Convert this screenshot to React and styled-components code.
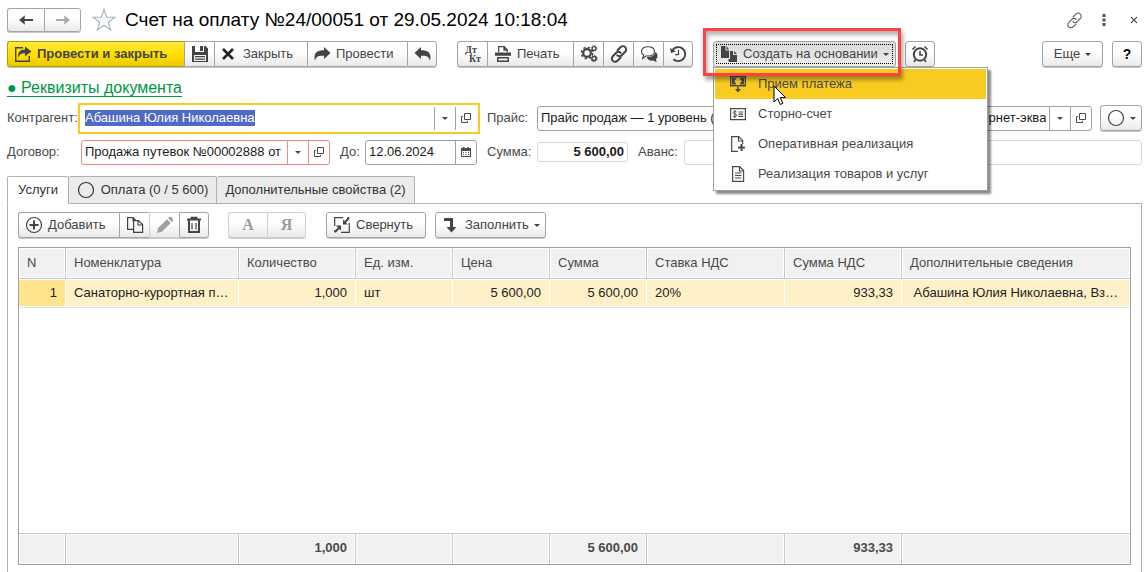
import React, { useEffect, useRef } from "react";
import styled, { createGlobalStyle, css } from "styled-components";

const GlobalStyle = createGlobalStyle`
  *, *::before, *::after {
    box-sizing: border-box;
  }
  body {
    margin: 0;
    background: #fff;
    color: #4a4a4a;
    font-family: "Liberation Sans", Arial, sans-serif;
    font-size: 13px;
    line-height: 16px;
    overflow: hidden;
  }
  button, input {
    font: inherit;
    color: inherit;
  }
  svg {
    display: block;
    flex: none;
  }
`;

const Page = styled.main`
  min-height: 100vh;
  display: flex;
  flex-direction: column;
  padding: 7px 3px 0 7px;
`;

const TitleBar = styled.header`
  display: flex;
  align-items: center;
  height: 26px;
`;

const Title = styled.h1`
  margin: 0 auto 0 6px;
  color: #000;
  font-size: 19px;
  line-height: 24px;
  font-weight: 400;
  white-space: nowrap;
`;

const WindowButton = styled.button`
  display: flex;
  align-items: center;
  justify-content: center;
  width: 16px;
  height: 24px;
  padding: 0;
  border: 0;
  background: none;
  color: #555;
`;

const StarButton = styled(WindowButton)`
  width: 30px;
  margin-left: 8px;
`;

const WindowButtons = styled.div`
  display: flex;
  gap: 14px;
`;

const Toolbar = styled.div`
  display: flex;
  height: 27px;
  margin-top: 8px;
`;

const Group = styled.div`
  display: flex;
  align-items: flex-start;
  position: relative;
  margin-left: ${p => p.$gap || 0}px;
`;

const Button = styled.button`
  display: flex;
  align-items: center;
  gap: 5px;
  width: ${p => p.$width || 30}px;
  height: ${p => p.$height || 26}px;
  padding: 0 6px;
  border: 1px solid #a4a4a4;
  border-right-width: 0;
  box-shadow: 0 1px 0 rgba(0, 0, 0, 0.22);
  background: linear-gradient(#fff 40%, #e9e9e9);
  color: #444;
  white-space: nowrap;

  &:first-child {
    border-radius: 3px 0 0 3px;
  }
  &:last-of-type {
    border-right-width: 1px;
    border-radius: 0 3px 3px 0;
  }
  &:first-child:last-of-type {
    border-radius: 3px;
  }
  &:disabled {
    border-color: #cfcfcf;
    color: #9b9b9b;
  }
  ${p =>
    p.$center &&
    css`
      justify-content: center;
      padding: 0;
    `}
  ${p =>
    p.$primary &&
    css`
      border-color: #b39b00;
      background: linear-gradient(#ffe93d, #ffe000 50%, #e9c900);
      font-weight: 700;
    `}
  ${p =>
    p.$pressed &&
    css`
      background: linear-gradient(#d9d9d9, #eee);
      outline: 1px dotted #000;
      outline-offset: -4px;
    `}
`;

const Letter = styled.span`
  font-family: "Liberation Serif", "Times New Roman", serif;
  font-size: 16px;
  font-weight: 700;
`;

const HelpMark = styled.b`
  color: #000;
  font-size: 14px;
`;

const Push = styled.div`
  margin-left: auto;
  display: flex;
  gap: 9px;
`;

const Highlight = styled.div`
  position: absolute;
  z-index: 3;
  top: -13px;
  left: -10px;
  width: 198px;
  height: 48px;
  border: 3px solid #fc4242;
  box-shadow: 2px 4px 4px rgba(0, 0, 0, 0.35), inset 2px 4px 4px rgba(0, 0, 0, 0.3);
  pointer-events: none;
`;

const Menu = styled.ul`
  position: absolute;
  z-index: 2;
  top: 26px;
  left: 0;
  width: 275px;
  margin: 0;
  padding: 1px;
  list-style: none;
  background: #fff;
  border: 1px solid #a0a0a0;
  box-shadow: 3px 3px 2px rgba(0, 0, 0, 0.45);
`;

const MenuItem = styled.button`
  display: flex;
  align-items: center;
  gap: 11px;
  width: 100%;
  height: 30px;
  padding: 0 14px;
  border: 0;
  background: ${p => (p.$active ? "#f9cb20" : "#fff")};
  color: #4a4a4a;
  text-align: left;
`;

const Pointer = styled.svg`
  position: absolute;
  z-index: 4;
  top: 44px;
  left: 60px;
`;

const DetailsLink = styled.a`
  align-self: flex-start;
  margin-top: 11px;
  border-bottom: 1px solid #009646;
  color: #009646;
  font-size: 16px;
  line-height: 17px;
  text-decoration: none;
`;

const FormRow = styled.div`
  display: flex;
  align-items: center;
  height: 30px;
  margin-top: ${p => p.$top}px;
`;

const Label = styled.label`
  flex: none;
  width: ${p => p.$width}px;
  margin-left: ${p => p.$gap || 0}px;
  white-space: nowrap;
`;

const Field = styled.div`
  display: flex;
  flex: ${p => p.$grow || 0} 1 ${p => p.$width}px;
  min-width: 0;
  height: ${p => p.$height || 25}px;
  border: 1px solid ${p => p.$color || "#a0a0a0"};
  border-radius: 3px;
  background: #fff;
  overflow: hidden;
  ${p =>
    p.$focused &&
    css`
      height: 31px;
      padding: 2px;
      border: 2px solid #f9cb20;
      border-radius: 0;
    `}
`;

const Input = styled.input`
  flex: 1;
  min-width: 0;
  padding: 0 3px;
  border: 0;
  outline: 0;
  background: none;
  color: #1c1c1c;
  text-align: ${p => (p.$bold ? "right" : "left")};
  font-weight: ${p => (p.$bold ? 700 : 400)};
  &::selection {
    background: #4f69c6;
    color: #fff;
  }
`;

const FieldButton = styled.button`
  display: flex;
  flex: none;
  align-items: center;
  justify-content: center;
  width: 21px;
  padding: 0;
  border: 0;
  border-left: 1px solid ${p => p.$color || "#a0a0a0"};
  background: none;
  color: #4a4a4a;
`;

const Tabs = styled.div`
  display: flex;
  margin-top: 9px;
`;

const Tab = styled.button`
  display: flex;
  align-items: center;
  justify-content: center;
  gap: 6px;
  width: ${p => p.$width}px;
  height: 28px;
  padding: 0 0 1px;
  border: 1px solid #b0b0b0;
  border-left-width: ${p => (p.$active ? 1 : 0)}px;
  border-bottom-color: ${p => (p.$active ? "#fff" : "#b0b0b0")};
  border-radius: 2px 2px 0 0;
  background: ${p => (p.$active ? "#fff" : "#ebebeb")};
  color: #333;
  white-space: nowrap;
  z-index: 1;
`;

const Panel = styled.section`
  flex: 1;
  display: flex;
  flex-direction: column;
  margin-top: -1px;
  padding: 0 10px 7px;
  border: solid #b0b0b0;
  border-width: 1px 1px 0;
`;

const Table = styled.table`
  flex: 1;
  width: 100%;
  margin-top: 8px;
  table-layout: fixed;
  border: 1px solid #a0a0a0;
  border-spacing: 0;
`;

const Cell = styled.td`
  height: 28px;
  padding: 0 8px;
  border: solid #fff;
  border-width: 1px 1px 1px 0;
  background: ${p => (p.$marker ? "#ffe48d" : "#fef1c8")};
  color: #222;
  text-align: ${p => (p.$right ? "right" : "left")};
  white-space: nowrap;
  overflow: hidden;
  text-overflow: ellipsis;
`;

const HeadCell = styled.th`
  height: 31px;
  padding: 0 8px;
  border-right: 1px solid #c8c8c8;
  border-bottom: 1px solid #c8c8c8;
  box-shadow: inset 0 0 0 1px #fff;
  background: #f1f1f1;
  font-weight: 400;
  text-align: left;
  white-space: nowrap;
  &:last-child {
    border-right: 0;
  }
`;

const FootCell = styled.td`
  height: 31px;
  padding: 0 8px 2px;
  border-right: 1px solid #c8c8c8;
  border-top: 1px solid #c8c8c8;
  box-shadow: inset 0 0 0 1px #fff;
  background: #f1f1f1;
  font-weight: 700;
  text-align: right;
  &:last-child {
    border-right: 0;
  }
`;

const Filler = styled.td`
  border-top: 1px solid #e2e2e2;
`;

const Svg = ({ w = 18, h = 18, children, ...rest }) => (
  <svg
    width={w}
    height={h}
    viewBox={`0 0 ${w} ${h}`}
    fill="none"
    stroke="currentColor"
    strokeWidth="1.4"
    aria-hidden="true"
    {...rest}
  >
    {children}
  </svg>
);

const Caret = () => (
  <Svg w={6} h={3} fill="currentColor" stroke="none">
    <path d="M0 0h6L3 3z" />
  </Svg>
);

const OpenIcon = () => (
  <Svg w={10} h={10} strokeWidth="1">
    <path d="M3.5 .5h6v6h-6zM2 3.5H.5v6h6V8" />
  </Svg>
);

const ArrowIcon = ({ flip, color }) => (
  <Svg w={14} h={12} stroke="none" fill={color}>
    <path
      d="M0 6 6 1.200 5.500 5H14v2H5.500L6 10.800z"
      transform={flip ? "translate(14 0) scale(-1 1)" : undefined}
    />
  </Svg>
);

const StarIcon = () => (
  <Svg w={24} h={24} stroke="#a5afb8" strokeWidth="1.1">
    <path d="m12 1.500 2.700 7.700 8.100.1-6.500 4.900 2.400 7.900-6.700-4.800-6.700 4.800 2.400-7.900L1.200 9.300l8.100-.1z" />
  </Svg>
);

const LinkIcon = ({ w = 18, thick = 1.4 }) => (
  <svg width={w} height={w} viewBox="0 0 18 18" fill="none" stroke="currentColor" strokeWidth={thick} strokeLinecap="round" aria-hidden="true">
    <path d="m7.500 5.200 3-3a3.200 3.200 0 0 1 4.700 4.600l-3.400 3.400a3.200 3.200 0 0 1-4.500 0M10.500 12.800l-3 3a3.200 3.200 0 0 1-4.700-4.600l3.400-3.400a3.200 3.200 0 0 1 4.500 0" />
  </svg>
);

const PostCloseIcon = () => (
  <Svg>
    <path d="M9 2.700H1.700v13.600h13.600V11" />
    <path d="M4.500 12.500c-1.300-5 1.500-8 6.500-8V1.500l6.500 5-6.500 4.700V8.300c-3.700-.2-5.500 1-6.500 4.200z" fill="currentColor" stroke="none" />
  </Svg>
);

const SaveIcon = () => (
  <Svg stroke="none" fill="currentColor">
    <path d="M1 1h3v6h9V1h1.500L17 3.500V17H1zM3 10v6h12v-6z" fillRule="evenodd" />
    <path d="M9 1h3v5H9zM4 11h10v1.200H4zM4 13.500h10v1.200H4z" />
  </Svg>
);

const CrossIcon = () => (
  <Svg w={17} h={12} strokeWidth="2.600" stroke="#222">
    <path d="m2 1 10 10M12 1 2 11" />
  </Svg>
);

const PostIcon = ({ flip }) => (
  <Svg w={17} h={14} stroke="none" fill="currentColor">
    <path
      d="M1 14C-.5 7 1.500 3.300 10 3.300V0l6.500 6L10 12V8.800C4.500 8.500 2 9.500 1 14z"
      transform={flip ? "translate(17 0) scale(-1 1)" : undefined}
    />
  </Svg>
);

const DtKtIcon = () => (
  <Svg stroke="none" fill="currentColor" fontFamily="Liberation Serif, serif" fontWeight="700" fontSize="10">
    <text x="1" y="8">Дт</text>
    <text x="5" y="17">Кт</text>
  </Svg>
);

const PrintIcon = () => (
  <Svg>
    <path d="M4.700 7V1.700h5.500l3 3V7M10 2v3h3" strokeWidth="1.300" />
    <path d="M1 7.500h16v3.200H1zM3 12h12v5H3zm1.500 1.400v2h9v-2z" fill="currentColor" stroke="none" fillRule="evenodd" />
  </Svg>
);

const GearsIcon = () => (
  <Svg>
    <circle cx="7" cy="8" r="3.800" strokeWidth="2.200" />
    <circle cx="7" cy="8" r="5.600" strokeWidth="1.600" strokeDasharray="2.200 2.200" />
    <circle cx="14" cy="3.500" r="1.900" strokeWidth="1.300" />
    <circle cx="14" cy="3.500" r="2.900" strokeWidth="1" strokeDasharray="1.100 1.200" />
    <circle cx="14" cy="13.500" r="2.100" strokeWidth="1.500" />
    <circle cx="14" cy="13.500" r="3.200" strokeWidth="1" strokeDasharray="1.200 1.300" />
  </Svg>
);

const ChatIcon = () => (
  <Svg>
    <path d="M8 1.700c4 0 6.500 2 6.500 4.700S12 11 8 11l-1.500-.1-3.800 2.600 1-3.500C2.300 9.200 1.500 7.900 1.500 6.400 1.500 3.700 4 1.700 8 1.700z" strokeWidth="1.100" />
    <path d="M15.500 7c2.700 2 2.500 5.700.4 7.200l.8 3-3.500-1.600c-3.200.4-5.700-.8-6.400-3.400 4.500.1 8-1.700 8.700-5.200z" fill="currentColor" stroke="none" />
  </Svg>
);

const HistoryIcon = () => (
  <Svg>
    <path d="M3.200 5.500a7 7 0 1 1 1.200 8.700" strokeWidth="1.900" />
    <path d="m1 3 1 5 5-1.500z" fill="currentColor" stroke="none" />
    <path d="M9.500 5v4.700H6" strokeWidth="1.300" />
  </Svg>
);

const BasisIcon = () => (
  <Svg stroke="none" fill="currentColor">
    <path d="M1 1h4.500v4.500H9V13H1zM6.500 1 9 4.500H6.500zM10 6h3v4h4v7H8.500v-3H10zM14 6l3 3h-3z" />
  </Svg>
);

const AlarmIcon = () => (
  <Svg>
    <circle cx="9" cy="9.500" r="6.200" strokeWidth="2" />
    <path d="M9 6v4h3M1.500 4.500l3-3M16.500 4.500l-3-3M4.500 14.500 3 17M13.500 14.500 15 17" strokeWidth="1.600" />
  </Svg>
);

const PaymentIcon = () => (
  <Svg>
    <path d="M1.700 1.700h14.600v9H1.700z" />
    <path d="M3 3h4v1.200C5.200 5 5.200 7.500 7 8.200v1.200H3zM15 3h-4v1.200c1.800.8 1.800 3.300 0 4v1.200h4zM6 14h6l-3 3.500zM8.200 12h1.600v2H8.200z" fill="currentColor" stroke="none" />
  </Svg>
);

const InvoiceIcon = () => (
  <Svg>
    <path d="M1.600 3.600h14.800v11H1.600zM9.500 7H14M9.500 9.200H14M9.500 11.400H14" strokeWidth="1.200" />
    <path d="M7.500 6.900c-1-1-3.300-.8-3.300.6 0 1.700 3.500 1 3.500 2.900 0 1.500-2.700 1.600-3.700.5M5.900 5.200v7.800" strokeWidth="1" />
  </Svg>
);

const DocPlusIcon = () => (
  <Svg>
    <path d="M9 16.300H2.700V1.700h7l4 4V9M9.500 2v4h4" strokeWidth="1.200" />
    <path d="M12.500 9v7M9 12.500h7" strokeWidth="2" />
  </Svg>
);

const DocIcon = () => (
  <Svg>
    <path d="M3.600 1.600h7l4 4v10.800h-11zM10.500 2v4h4M6 8h6.500M6 10.500h6.500M6 13h6.500" strokeWidth="1.200" />
  </Svg>
);

const PlusIcon = () => (
  <Svg>
    <circle cx="9" cy="9" r="7.500" strokeWidth="1.200" />
    <path d="M9 4.500v9M4.500 9h9" strokeWidth="2" />
  </Svg>
);

const CopyIcon = () => (
  <Svg>
    <path d="M7 13.400H1.600V1.600H7l3 3M7 2v3.500M7.600 4.600h5l4 4v7.800h-9zM12 5v4h4" strokeWidth="1.200" />
  </Svg>
);

const PencilIcon = () => (
  <Svg stroke="none" fill="#a0a0a0">
    <path d="m1 17 1.200-5L11 3.200l3.800 3.800L6 15.800zM12 2.200l1.300-1.300c1.800-.7 4.100 1.500 3.800 3.500L15.800 6z" />
  </Svg>
);

const TrashIcon = () => (
  <Svg strokeWidth="2">
    <path d="M2 3.500h14M6.500 3V1.800h5V3M4 4v12h10V4" />
    <path d="M7 7v6.500M11 7v6.500" strokeWidth="1.200" />
  </Svg>
);

const CollapseIcon = () => (
  <Svg>
    <path d="M10 1.700H1.700V10M8 16.300h8.300V7M1.700 16.300v-2M16.300 1.700h-2" strokeWidth="1.200" />
    <path d="m16 2-4 4M2 16l4-4" strokeWidth="2" />
    <path d="M10 3.500v5h5zM8 14.500v-5H3z" fill="currentColor" stroke="none" />
  </Svg>
);

const FillIcon = () => (
  <Svg w={18} h={16} stroke="none" fill="currentColor">
    <path d="M2 1h9v9h3.500l-5 5.500-5-5.500H8V4H2z" />
  </Svg>
);

const CircleIcon = () => (
  <Svg>
    <circle cx="9" cy="9" r="7.500" strokeWidth="1.200" />
  </Svg>
);

const CalendarIcon = () => (
  <Svg w={10} h={10} stroke="none" fill="currentColor">
    <path d="M0 1h10v9H0zM1 4v5h8V4z" fillRule="evenodd" />
    <path d="M2 0h1.500v1.500H2zM6.500 0H8v1.500H6.500zM2 5h1v1H2zM4.500 5h1v1h-1zM7 5h1v1H7zM2 7h1v1H2zM4.500 7h1v1h-1zM7 7h1v1H7z" />
  </Svg>
);

const menuItems = [
  { text: "Прием платежа", Icon: PaymentIcon },
  { text: "Сторно-счет", Icon: InvoiceIcon },
  { text: "Оперативная реализация", Icon: DocPlusIcon },
  { text: "Реализация товаров и услуг", Icon: DocIcon }
];

const columns = [
  { title: "N", width: 47, value: "1", right: true },
  { title: "Номенклатура", width: 173, value: "Санаторно-курортная п…" },
  { title: "Количество", width: 117, value: "1,000", right: true, total: "1,000" },
  { title: "Ед. изм.", width: 97, value: "шт" },
  { title: "Цена", width: 97, value: "5 600,00", right: true },
  { title: "Сумма", width: 97, value: "5 600,00", right: true, total: "5 600,00" },
  { title: "Ставка НДС", width: 138, value: "20%" },
  { title: "Сумма НДС", width: 117, value: "933,33", right: true, total: "933,33" },
  { title: "Дополнительные сведения", value: "\u00a0Абашина Юлия Николаевна, Вз…" }
];

const Picker = ({ color }) => (
  <>
    <FieldButton $color={color} aria-label="Выбрать">
      <Caret />
    </FieldButton>
    <FieldButton $color={color} aria-label="Открыть">
      <OpenIcon />
    </FieldButton>
  </>
);

const Requisites = () => {
  const client = useRef(null);

  useEffect(() => {
    client.current.focus();
    client.current.select();
  }, []);

  return (
    <>
      <FormRow $top={6}>
        <Label htmlFor="client" $width={71}>Контрагент:</Label>
        <Field $width={402} $grow={1} $focused>
          <Input id="client" ref={client} defaultValue="Абашина Юлия Николаевна" />
          <Picker />
        </Field>
        <Label htmlFor="price" $gap={7} $width={50}>Прайс:</Label>
        <Field $width={330} $grow={1}>
          <Input id="price" defaultValue="Прайс продаж — 1 уровень (основной)" />
          <Picker />
        </Field>
        <Label htmlFor="method" $gap={8} $width={80}>Вид оплаты:</Label>
        <Field $width={137}>
          <Input id="method" defaultValue="Интернет-эквайринг" />
          <Picker />
        </Field>
        <Group $gap={8}>
          <Button $center $width={42} aria-label="Состояние"><CircleIcon /><Caret /></Button>
        </Group>
      </FormRow>
      <FormRow $top={4}>
        <Label htmlFor="contract" $width={74}>Договор:</Label>
        <Field $width={249} $color="#f48a84">
          <Input id="contract" defaultValue="Продажа путевок №00002888 от 29.05.2024" />
          <Picker color="#f48a84" />
        </Field>
        <Label htmlFor="until" $gap={10} $width={25}>До:</Label>
        <Field $width={112}>
          <Input id="until" defaultValue="12.06.2024" />
          <FieldButton aria-label="Календарь">
            <CalendarIcon />
          </FieldButton>
        </Field>
        <Label htmlFor="sum" $gap={10} $width={50}>Сумма:</Label>
        <Field $width={91} $height={20} $color="#d8d8d8">
          <Input id="sum" $bold readOnly defaultValue="5 600,00" />
        </Field>
        <Label htmlFor="advance" $gap={10} $width={46}>Аванс:</Label>
        <Field $width={100} $grow={1} $color="#d8d8d8">
          <Input id="advance" readOnly />
        </Field>
      </FormRow>
    </>
  );
};

const Commands = () => (
  <Toolbar>
    <Group>
      <Button $primary $width={177}><PostCloseIcon />Провести и закрыть</Button>
      <Button $center aria-label="Записать"><SaveIcon /></Button>
      <Button $width={93}><CrossIcon />Закрыть</Button>
      <Button $width={100}><PostIcon />Провести</Button>
      <Button $center aria-label="Отмена проведения"><PostIcon flip /></Button>
    </Group>
    <Group $gap={20}>
      <Button $center aria-label="Дт Кт"><DtKtIcon /></Button>
      <Button $width={86}><PrintIcon />Печать</Button>
      <Button $center aria-label="Настройки"><GearsIcon /></Button>
      <Button $center aria-label="Ссылка"><LinkIcon thick={2} /></Button>
      <Button $center aria-label="Обсуждение"><ChatIcon /></Button>
      <Button $center aria-label="История"><HistoryIcon /></Button>
    </Group>
    <Group $gap={20}>
      <Button $width={183} $pressed><BasisIcon />Создать на основании<Caret /></Button>
      <Menu>
        {menuItems.map(({ text, Icon }, i) => (
          <li key={text}>
            <MenuItem $active={i === 0}><Icon />{text}</MenuItem>
          </li>
        ))}
      </Menu>
      <Highlight />
      <Pointer width="14" height="21" viewBox="0 0 14 21" aria-hidden="true">
        <path d="M1 1v16l3.700-3.500 2.600 6 2.500-1.100L7.300 12.500h5.200z" fill="#fff" stroke="#000" />
      </Pointer>
    </Group>
    <Group $gap={9}>
      <Button $center aria-label="Напомнить"><AlarmIcon /></Button>
    </Group>
    <Push>
      <Group><Button $center $width={61}>Еще<Caret /></Button></Group>
      <Group><Button $center><HelpMark>?</HelpMark></Button></Group>
    </Push>
  </Toolbar>
);

const Services = () => (
  <Panel>
    <Toolbar>
      <Group>
        <Button $width={101}><PlusIcon />Добавить</Button>
        <Button $center aria-label="Скопировать"><CopyIcon /></Button>
        <Button $center disabled aria-label="Изменить"><PencilIcon /></Button>
        <Button $center aria-label="Удалить"><TrashIcon /></Button>
      </Group>
      <Group $gap={19}>
        <Button $center $width={39} disabled><Letter>А</Letter></Button>
        <Button $center $width={39} disabled><Letter>Я</Letter></Button>
      </Group>
      <Group $gap={20}>
        <Button $width={100}><CollapseIcon />Свернуть</Button>
      </Group>
      <Group $gap={9}>
        <Button $width={111}><FillIcon />Заполнить<Caret /></Button>
      </Group>
    </Toolbar>
    <Table>
      <colgroup>
        {columns.map(c => <col key={c.title} width={c.width} />)}
      </colgroup>
      <thead>
        <tr>
          {columns.map(c => <HeadCell key={c.title}>{c.title}</HeadCell>)}
        </tr>
      </thead>
      <tbody>
        <tr>
          {columns.map((c, i) => (
            <Cell key={c.title} $right={c.right} $marker={i === 0}>{c.value}</Cell>
          ))}
        </tr>
        <tr>
          <Filler colSpan={columns.length} />
        </tr>
      </tbody>
      <tfoot>
        <tr>
          {columns.map(c => <FootCell key={c.title}>{c.total}</FootCell>)}
        </tr>
      </tfoot>
    </Table>
  </Panel>
);

const App = () => (
  <Page>
    <GlobalStyle />
    <TitleBar>
      <Group>
        <Button $center $width={37} $height={24} aria-label="Назад"><ArrowIcon color="#444" /></Button>
        <Button $center $width={37} $height={24} aria-label="Вперед"><ArrowIcon flip color="#aaa" /></Button>
      </Group>
      <StarButton aria-label="В избранное"><StarIcon /></StarButton>
      <Title>Счет на оплату №24/00051 от 29.05.2024 10:18:04</Title>
      <WindowButtons>
        <WindowButton aria-label="Получить ссылку"><LinkIcon w={17} thick={1.1} /></WindowButton>
        <WindowButton aria-label="Дополнительно">
          <Svg w={4} h={12} fill="currentColor" stroke="none">
            <path d="M.5 0h3v3h-3zM.5 4.500h3v3h-3zM.5 9h3v3h-3z" />
          </Svg>
        </WindowButton>
        <WindowButton aria-label="Закрыть окно">
          <Svg w={8} h={8} strokeWidth="1.100"><path d="m1 1 6 6M7 1 1 7" /></Svg>
        </WindowButton>
      </WindowButtons>
    </TitleBar>
    <Commands />
    <DetailsLink href="#details">● Реквизиты документа</DetailsLink>
    <Requisites />
    <Tabs role="tablist">
      <Tab role="tab" aria-selected="true" $active $width={62}>Услуги</Tab>
      <Tab role="tab" $width={148}><CircleIcon />Оплата (0 / 5 600)</Tab>
      <Tab role="tab" $width={198}>Дополнительные свойства (2)</Tab>
    </Tabs>
    <Services />
  </Page>
);

export default App;
